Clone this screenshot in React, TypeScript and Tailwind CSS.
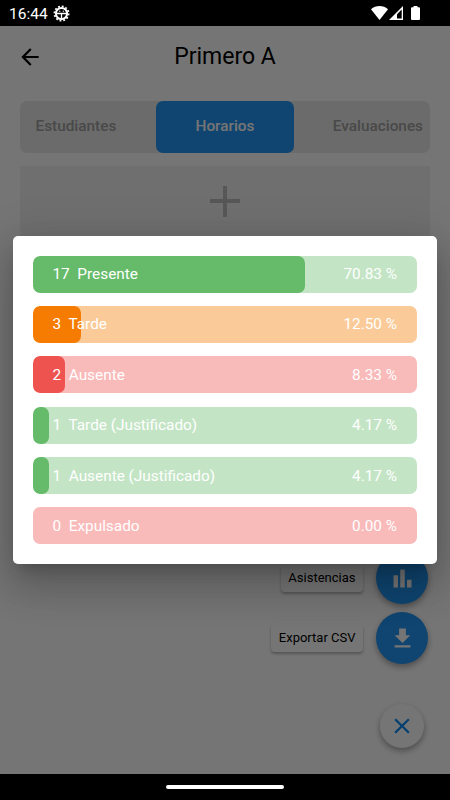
import { MdArrowBack, MdBarChart, MdClose } from "react-icons/md";

type Stat = {
  count: number;
  label: string;
  percent: number;
  fill: string;
  track: string;
};

const stats: Stat[] = [
  { count: 17, label: "Presente", percent: 70.83, fill: "bg-[#66bb6a]", track: "bg-[#c3e5c5]" },
  { count: 3, label: "Tarde", percent: 12.5, fill: "bg-[#f57c00]", track: "bg-[#facb99]" },
  { count: 2, label: "Ausente", percent: 8.33, fill: "bg-[#ef5350]", track: "bg-[#f9baba]" },
  { count: 1, label: "Tarde (Justificado)", percent: 4.17, fill: "bg-[#66bb6a]", track: "bg-[#c3e5c5]" },
  { count: 1, label: "Ausente (Justificado)", percent: 4.17, fill: "bg-[#66bb6a]", track: "bg-[#c3e5c5]" },
  { count: 0, label: "Expulsado", percent: 0, fill: "bg-[#ef5350]", track: "bg-[#f9baba]" },
];

function StatusBar() {
  return (
    <div className="relative z-20 flex h-[26px] items-center bg-black pl-[9px] pr-[30px] text-white">
      <span className="pt-[3px] text-[15.5px] leading-none">16:44</span>
      <svg className="ml-[5px]" width="17" height="17" viewBox="0 0 17 17" fill="none" stroke="white">
        <circle cx="8.5" cy="8.5" r="7.1" strokeWidth="1.8" strokeDasharray="1.9 1.82" />
        <circle cx="8.5" cy="8.5" r="5.6" strokeWidth="2" />
        <path d="M3 8.5h11M8.5 8.5v5.5" strokeWidth="1.3" />
        <path d="M6 6.2h1.3M9.7 6.2H11" strokeWidth="1" />
      </svg>
      <div className="ml-auto flex items-center">
        <svg width="17" height="14" viewBox="0 0 17 14" fill="white">
          <path d="M0 3.2C4.8-1 12.2-1 17 3.2L8.5 14z" />
        </svg>
        <svg className="ml-px" width="14" height="14" viewBox="0 0 14 14">
          <path d="M0 14L14 0v14z" fill="white" />
          <path d="M8 8.3l4.7-4.7v9H8z" fill="black" />
        </svg>
        <svg className="ml-2" width="9" height="14" viewBox="0 0 9 14" fill="white">
          <path d="M2.5 0h4v1.3H8q1 0 1 1V13q0 1-1 1H1q-1 0-1-1V2.3q0-1 1-1h1.5z" />
        </svg>
      </div>
    </div>
  );
}

function StatBar({ count, label, percent, fill, track }: Stat) {
  return (
    <div className={`relative h-[37px] overflow-hidden rounded-[7px] ${track}`}>
      <div className={`h-full rounded-[7px] ${fill}`} style={{ width: `${percent}%` }} />
      <div className="absolute inset-0 flex items-center justify-between pl-[19.5px] pr-5 pt-px text-[15.35px] text-white">
        <span className="whitespace-pre">{`${count}  ${label}`}</span>
        <span>{percent.toFixed(2)} %</span>
      </div>
    </div>
  );
}

export default function App() {
  return (
    <div className="relative flex h-[800px] w-[450px] flex-col overflow-hidden bg-white font-['Roboto',sans-serif]">
      <StatusBar />

      <header className="grid h-[62px] grid-cols-[60px_1fr_60px] items-center">
        <MdArrowBack className="mb-px ml-[17px] size-[26px] text-black" />
        <h1 className="pb-[2px] text-center text-[23px] leading-none text-black">Primero A</h1>
      </header>

      <nav className="mx-5 mt-[13px] flex h-[52px] items-center rounded-[7px] bg-[#e9e9e9] text-[15.35px] font-medium text-[#a0a0a0]">
        <span className="w-[136px] pb-px pl-[15.5px]">Estudiantes</span>
        <span className="flex h-full w-[138px] items-center justify-center rounded-[7px] bg-[#2196f3] pb-px text-white">Horarios</span>
        <span className="flex-1 pb-px pr-[7px] text-right">Evaluaciones</span>
      </nav>

      <div className="mx-5 mt-[13px] flex h-[120px] justify-center bg-[#f1f1f1] pt-[19px]">
        <svg width="32" height="32" viewBox="0 0 32 32" stroke="#bdbdbd" strokeWidth="4">
          <path d="M16 1v31M1 16h30" />
        </svg>
      </div>

      <div className="mt-auto flex flex-col items-end gap-2 pb-[26px] pr-[22px]">
        <div className="flex items-center gap-[13px]">
          <span className="rounded bg-white px-[7.5px] py-[5px] text-[13px] leading-[18px] text-black shadow-[0_2px_3px_rgba(0,0,0,0.28)]">Asistencias</span>
          <span className="flex size-[52px] items-center justify-center rounded-full bg-[#2196f3] shadow-[0_3px_6px_rgba(0,0,0,0.35)]">
            <MdBarChart className="size-[27px] text-white" />
          </span>
        </div>
        <div className="flex items-center gap-[13px]">
          <span className="rounded bg-white px-[7.5px] py-[5px] text-[13px] leading-[18px] text-black shadow-[0_2px_3px_rgba(0,0,0,0.28)]">Exportar CSV</span>
          <span className="flex size-[52px] items-center justify-center rounded-full bg-[#2196f3] shadow-[0_3px_6px_rgba(0,0,0,0.35)]">
            <svg className="size-[27px]" viewBox="0 0 24 24" fill="white">
              <path d="M19 9h-4V3H9v6H5l7 7 7-7zM5 18v2h14v-2H5z" />
            </svg>
          </span>
        </div>
        <span className="mr-[4px] mt-[32px] flex size-[44px] items-center justify-center rounded-full bg-white shadow-[0_3px_6px_rgba(0,0,0,0.35)]">
          <MdClose className="size-[26px] text-[#0087f5]" />
        </span>
      </div>

      <footer className="relative z-20 flex h-[26px] items-center justify-center bg-black">
        <div className="h-1 w-[118px] rounded-full bg-white" />
      </footer>

      <div className="absolute inset-0 z-10 flex items-center justify-center bg-black/54">
        <div className="flex h-[328px] w-[424px] flex-col justify-between rounded-[5px] bg-white px-5 py-[19.5px] shadow-[0_11px_15px_-7px_rgba(0,0,0,0.2),0_24px_38px_3px_rgba(0,0,0,0.14),0_9px_46px_8px_rgba(0,0,0,0.12)]">
          {stats.map((stat) => (
            <StatBar key={stat.label} {...stat} />
          ))}
        </div>
      </div>
    </div>
  );
}
